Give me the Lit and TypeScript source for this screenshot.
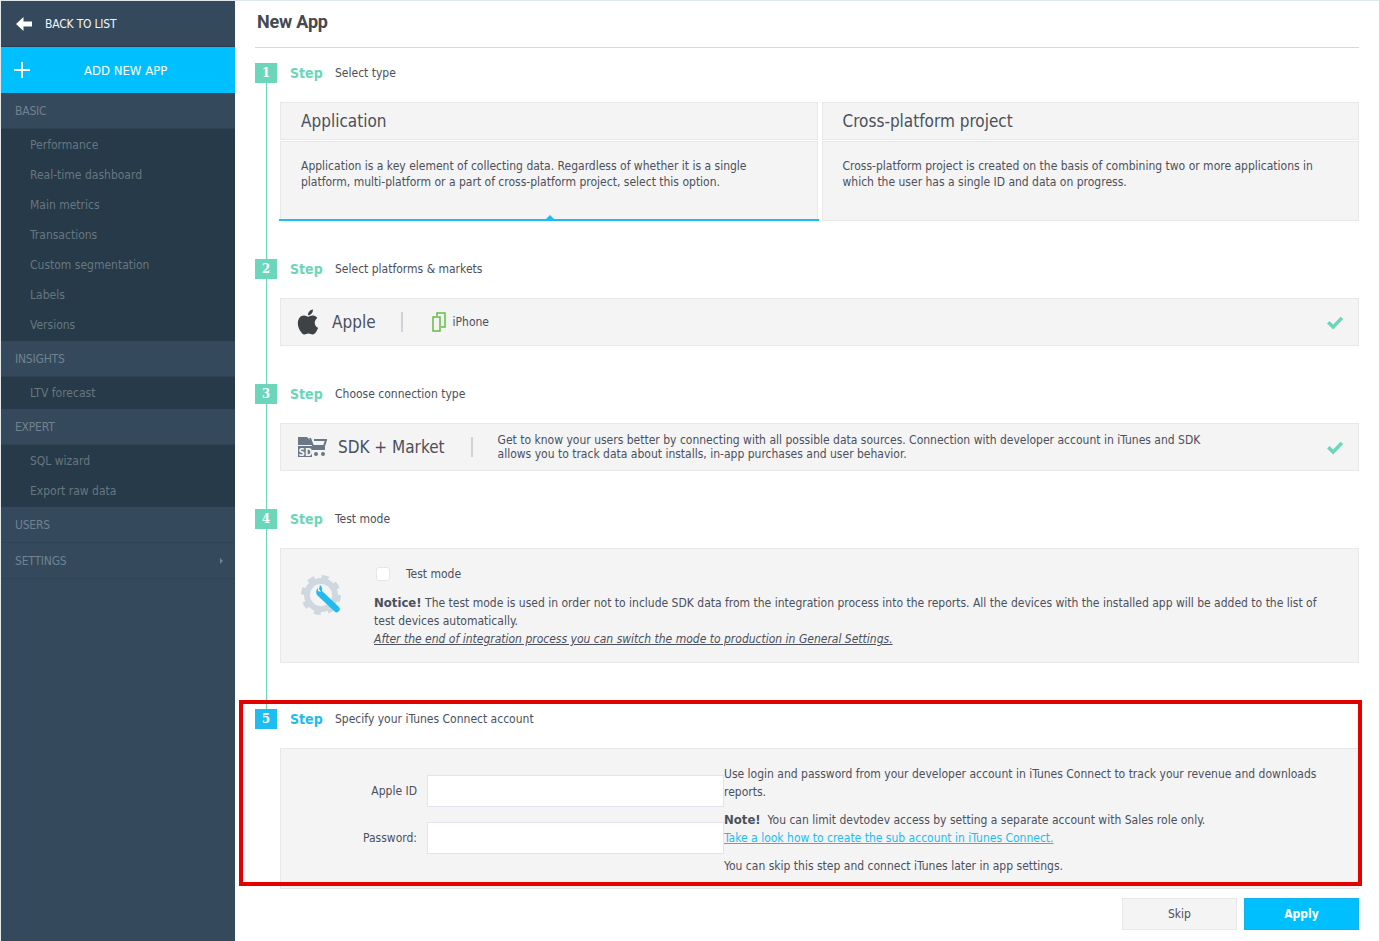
import { LitElement, html, css, svg } from 'lit';
import { customElement } from 'lit/decorators.js';

const MENU = [
  { title: 'BASIC', items: ['Performance', 'Real-time dashboard', 'Main metrics', 'Transactions', 'Custom segmentation', 'Labels', 'Versions'] },
  { title: 'INSIGHTS', items: ['LTV forecast'] },
  { title: 'EXPERT', items: ['SQL wizard', 'Export raw data'] },
  { title: 'USERS', items: [] },
  { title: 'SETTINGS', items: [], arrow: true },
];

const check = svg`<svg class="check" width="18" height="14" viewBox="0 0 18 14"><path d="M1 7.5l2.6-2.4 3.6 3.5L14.6.8 17.2 3 7.2 13.4z" fill="#6bd6ba"/></svg>`;

@customElement('app-root')
export class AppRoot extends LitElement {
  static styles = css`
    :host {
      display: block;
      position: relative;
      width: 1380px;
      height: 941px;
      overflow: hidden;
      background: #fff;
      font-family: "DejaVu Sans", sans-serif;
      font-stretch: condensed;
      font-size: 12px;
      color: #4b505c;
      box-sizing: border-box;
      border-top: 1px solid #dfe6ec;
      border-left: 1px solid #e6e9ec;
      border-right: 1px solid #d8d8d8;
    }
    * { box-sizing: border-box; }
    .layout { display: flex; height: 100%; }

    /* sidebar */
    .side { width: 234px; flex: none; background: #34495c; }
    .back {
      height: 46px;
      display: flex;
      align-items: center;
      padding-left: 15px;
      gap: 13px;
      color: #f2f5f7;
      border-bottom: 1px solid #2a3c4b;
      letter-spacing: -0.2px;
    }
    .add {
      height: 46px;
      display: flex;
      align-items: center;
      background: #00bfff;
      color: #fff;
      font-size: 13px;
      padding-left: 13px;
    }
    .add span { margin-left: 54px; }
    .group {
      height: 36px;
      display: flex;
      align-items: center;
      justify-content: space-between;
      padding: 0 12px 0 14px;
      color: #71828f;
      border-bottom: 1px solid #2f4354;
      letter-spacing: -0.2px;
    }
    .arrow { width: 0; height: 0; border-left: 3px solid #71828f; border-top: 3px solid transparent; border-bottom: 3px solid transparent; }
    .items { background: #263a4a; padding: 1px 0; }
    .items a { display: block; height: 30px; line-height: 30px; padding-left: 29px; color: #66777f; }
    .items.one a { height: 30px; }

    /* main */
    .main { flex: 1; position: relative; padding: 0 20px; }
    h1 {
      margin: 0;
      height: 46px;
      line-height: 42px;
      padding-left: 2px;
      font-size: 18px;
      font-weight: 700;
      font-family: "Roboto", sans-serif;
      font-stretch: normal;
      letter-spacing: -0.2px;
      color: #46494f;
      border-bottom: 1px solid #d3dbe1;
      box-sizing: content-box;
    }
    .steps { position: relative; padding-top: 15px; }
    .steps::before {
      content: '';
      position: absolute;
      left: 11px;
      top: 20px;
      height: 650px;
      width: 1px;
      background: #6bd6ba;
    }
    .step { position: relative; margin-bottom: 38px; }
    .step.gap { margin-bottom: 46px; }
    .step.last { margin-bottom: 9px; }
    .head { display: flex; align-items: center; height: 20px; margin-bottom: 19px; }
    .num {
      width: 22px;
      height: 20px;
      background: #6bd6ba;
      color: #fff;
      text-align: center;
      line-height: 20px;
      font-weight: 700;
      font-size: 13px;
      font-family: "DejaVu Serif", serif;
    }
    .word { margin-left: 13px; width: 45px; color: #6bd6ba; font-weight: 700; font-size: 14px; }
    .step.active .num { background: #1ebcf0; }
    .step.active .word { color: #1ebcf0; }
    .panel { margin-left: 25px; background: #f4f4f4; border: 1px solid #e8e8e8; }

    .types { display: flex; gap: 4px; margin-left: 25px; height: 119px; }
    .type { position: relative; flex: 1; display: flex; flex-direction: column; gap: 1px; }
    .type b {
      display: block;
      height: 38px;
      line-height: 36px;
      padding-left: 20px;
      font-weight: 400;
      font-size: 17px;
      background: #f4f4f4;
      border: 1px solid #e8e8e8;
    }
    .type p {
      flex: 1;
      margin: 0;
      padding: 16px 20px;
      line-height: 16px;
      background: #f4f4f4;
      border: 1px solid #e8e8e8;
    }
    .type.on::after {
      content: '';
      position: absolute;
      left: -1px;
      right: -1px;
      bottom: 0;
      height: 2px;
      background: #1ebcf0;
    }
    .type.on::before {
      content: '';
      position: absolute;
      left: 266px;
      bottom: 2px;
      border: 4px solid transparent;
      border-top: 0;
      border-bottom-color: #1ebcf0;
    }

    .row { height: 48px; display: flex; align-items: center; position: relative; }
    .row .big { font-size: 17px; }
    .sep { width: 2px; height: 20px; background: #cdd3d9; }
    .check { position: absolute; right: 14px; top: 17px; }
    .desc { line-height: 14px; width: 730px; }

    .test { height: 115px; display: flex; }
    .test .ico { width: 93px; padding: 26px 0 0 20px; }
    .test .txt { flex: 1; padding-top: 16px; line-height: 18px; padding-right: 20px; }
    .cb { display: flex; align-items: center; height: 18px; margin-bottom: 11px; gap: 16px; padding-left: 2px; }
    .box { width: 14px; height: 14px; background: #fff; border: 1px solid #e6e6e6; border-radius: 3px; }
    .test p { margin: 0; }
    .test em { text-decoration: underline; }

    .account { height: 141px; display: flex; }
    .form { width: 443px; padding: 26px 0 0; display: flex; flex-direction: column; gap: 15px; }
    .field { display: flex; align-items: center; justify-content: flex-end; gap: 10px; }
    .input { width: 297px; height: 32px; background: #fff; border: 1px solid #dfe5ea; }
    .info { flex: 1; padding-top: 16px; line-height: 18px; }
    .info p { margin: 0 0 10px; }
    .info a { color: #1ebcf0; text-decoration: underline; display: block; }
    .note { font-weight: 700; font-size: 13px; }

    .actions { display: flex; justify-content: flex-end; gap: 7px; }
    .btn { width: 115px; height: 32px; line-height: 32px; text-align: center; background: #f4f4f4; border: 1px solid #e8e8e8; line-height: 30px; }
    .btn.primary { background: #00bfff; border-color: #14b4ea; color: #fff; font-weight: 700; }

    .mark {
      position: absolute;
      left: 4px;
      top: 699px;
      width: 1123px;
      height: 186px;
      border: 4px solid #e30000;
      pointer-events: none;
    }
  `;

  render() {
    return html`
      <div class="layout">
        <nav class="side">
          <div class="back">
            <svg width="16" height="14" viewBox="0 0 16 14"><path d="M7.5 0L0 7l7.5 7V9.5H16v-5H7.5z" fill="#fff"/></svg>
            BACK TO LIST
          </div>
          <div class="add">
            <svg width="16" height="16" viewBox="0 0 16 16"><path d="M7 0h2v7h7v2H9v7H7V9H0V7h7z" fill="#fff"/></svg>
            <span>ADD NEW APP</span>
          </div>
          ${MENU.map(
            (g) => html`
              <div class="group">${g.title}${g.arrow ? html`<i class="arrow"></i>` : ''}</div>
              ${g.items.length ? html`<div class="items">${g.items.map((i) => html`<a>${i}</a>`)}</div>` : ''}
            `
          )}
        </nav>
        <div class="main">
          <h1>New App</h1>
          <div class="steps">
            <section class="step">
              ${this._head(1, 'Select type')}
              <div class="types">
                <div class="type on">
                  <b>Application</b>
                  <p>Application is a key element of collecting data. Regardless of whether it is a single platform, multi-platform or a part of cross-platform project, select this option.</p>
                </div>
                <div class="type">
                  <b>Cross-platform project</b>
                  <p>Cross-platform project is created on the basis of combining two or more applications in which the user has a single ID and data on progress.</p>
                </div>
              </div>
            </section>
            <section class="step">
              ${this._head(2, 'Select platforms & markets')}
              <div class="panel row">
                <svg style="margin-left:12px" width="30" height="30" viewBox="0 0 24 24"><path fill="#3f4245" d="M18.71 19.5c-.83 1.24-1.71 2.45-3.05 2.47-1.34.03-1.77-.79-3.29-.79-1.53 0-2 .77-3.27.82-1.31.05-2.3-1.32-3.14-2.53C4.25 17 2.94 12.45 4.7 9.39c.87-1.52 2.43-2.48 4.12-2.51 1.28-.02 2.5.87 3.29.87.78 0 2.26-1.07 3.81-.91.65.03 2.47.26 3.64 1.98-.09.06-2.17 1.28-2.15 3.81.03 3.02 2.65 4.03 2.68 4.04-.03.07-.42 1.44-1.38 2.83M13 3.5c.73-.83 1.94-1.46 2.94-1.5.13 1.17-.34 2.35-1.04 3.19-.69.85-1.83 1.51-2.95 1.42-.15-1.15.41-2.35 1.05-3.11z"/></svg>
                <span class="big" style="margin-left:9px">Apple</span>
                <i class="sep" style="margin-left:25px"></i>
                <svg style="margin-left:29px" width="14" height="20" viewBox="0 0 14 20" fill="none" stroke="#66bb44" stroke-width="1.5"><rect x="1" y="5" width="7" height="14"/><path d="M5 4V1h8v14h-4"/></svg>
                <span style="margin-left:7px">iPhone</span>
                ${check}
              </div>
            </section>
            <section class="step">
              ${this._head(3, 'Choose connection type')}
              <div class="panel row">
                <svg style="margin-left:16px" width="30" height="22" viewBox="0 0 30 22">
                  <path d="M1 1h9l5 5v3H1z" fill="#6b7686"/>
                  <path d="M13 2l3 8h11l2-6H17" fill="none" stroke="#6b7686" stroke-width="2"/>
                  <path d="M15 11h13v3H15z" fill="#6b7686"/>
                  <circle cx="19" cy="18" r="2" fill="#6b7686"/><circle cx="26" cy="18" r="2" fill="#6b7686"/>
                  <rect x="1" y="10" width="14" height="11" fill="#6b7686"/>
                  <text x="1.5" y="19.5" font-size="10" font-weight="700" fill="#f4f4f4">SD</text>
                </svg>
                <span class="big" style="margin-left:11px">SDK + Market</span>
                <i class="sep" style="margin-left:26px"></i>
                <span class="desc" style="margin-left:25px">Get to know your users better by connecting with all possible data sources. Connection with developer account in iTunes and SDK allows you to track data about installs, in-app purchases and user behavior.</span>
                ${check}
              </div>
            </section>
            <section class="step gap">
              ${this._head(4, 'Test mode')}
              <div class="panel test">
                <div class="ico">
                  <svg width="42" height="42" viewBox="0 0 42 42">
                    <circle cx="20" cy="20" r="14" fill="none" stroke="#cfd8e0" stroke-width="6"/>
                    <circle cx="20" cy="20" r="18" fill="none" stroke="#cfd8e0" stroke-width="4" stroke-dasharray="7 7.14"/>
                    <path d="M15 11a6 6 0 0 0-1 7l17 16a3 3 0 0 0 5-4L19 14a6 6 0 0 0-2-6l-1 4 2 3-3-1z" fill="#1ebcf0" transform="translate(2 2)"/>
                  </svg>
                </div>
                <div class="txt">
                  <div class="cb"><i class="box"></i>Test mode</div>
                  <p><span class="note">Notice!</span> The test mode is used in order not to include SDK data from the integration process into the reports. All the devices with the installed app will be added to the list of test devices automatically.</p>
                  <p><em>After the end of integration process you can switch the mode to production in General Settings.</em></p>
                </div>
              </div>
            </section>
            <section class="step last active">
              ${this._head(5, 'Specify your iTunes Connect account')}
              <div class="panel account">
                <div class="form">
                  <div class="field">Apple ID<i class="input"></i></div>
                  <div class="field">Password:<i class="input"></i></div>
                </div>
                <div class="info">
                  <p>Use login and password from your developer account in iTunes Connect to track your revenue and downloads reports.</p>
                  <p><span class="note">Note!</span>&nbsp; You can limit devtodev access by setting a separate account with Sales role only. <a>Take a look how to create the sub account in iTunes Connect.</a></p>
                  <p>You can skip this step and connect iTunes later in app settings.</p>
                </div>
              </div>
            </section>
          </div>
          <div class="actions">
            <div class="btn">Skip</div>
            <div class="btn primary">Apply</div>
          </div>
          <div class="mark"></div>
        </div>
      </div>
    `;
  }

  _head(n: number, label: string) {
    return html`<div class="head"><span class="num">${n}</span><span class="word">Step</span><span>${label}</span></div>`;
  }
}
